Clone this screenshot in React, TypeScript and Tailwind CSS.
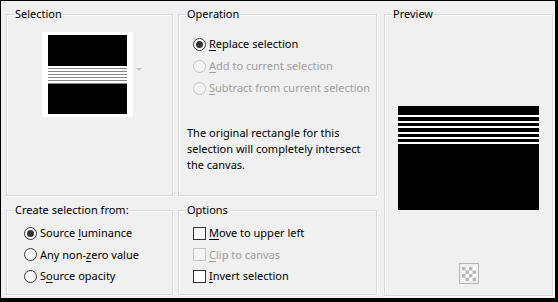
import React from "react"

const font = { fontFamily: '"Noto Sans", "Open Sans", sans-serif' }

function Radio({ checked, disabled }: { checked?: boolean; disabled?: boolean }) {
  return (
    <span
      className={`relative flex h-[13px] w-[13px] shrink-0 items-center justify-center rounded-full border ${
        disabled ? "border-[#c4c4c4] bg-[#f4f4f4]" : "border-[#333] bg-white"
      }`}
    >
      {checked && <span className="h-[7px] w-[7px] rounded-full bg-[#333]" />}
    </span>
  )
}

function Check({ disabled }: { disabled?: boolean }) {
  return (
    <span
      className={`h-[13px] w-[13px] shrink-0 border ${
        disabled ? "border-[#c4c4c4] bg-[#f4f4f4]" : "border-[#333] bg-white"
      }`}
    />
  )
}

function Group({ title, className, children }: { title: string; className?: string; children?: React.ReactNode }) {
  return (
    <div className={`flex flex-col border border-[#d9d9d9] shadow-[1px_1px_0_#fff,inset_1px_1px_0_#fff] ${className ?? ""}`}>
      <div className="-mt-[9px] ml-[7px] w-fit self-start bg-[#f0f0f0] px-[1px] text-[11px] leading-[16px]">{title}</div>
      {children}
    </div>
  )
}

function Option({
  kind,
  checked,
  disabled,
  label,
  className,
}: {
  kind: "radio" | "check"
  checked?: boolean
  disabled?: boolean
  label: React.ReactNode
  className?: string
}) {
  return (
    <div className={`flex items-center gap-[3px] ${disabled ? "text-[#a0a0a0]" : "text-black"} ${className ?? ""}`}>
      {kind === "radio" ? <Radio checked={checked} disabled={disabled} /> : <Check disabled={disabled} />}
      <span className="whitespace-nowrap text-[11px] leading-[16px]">{label}</span>
    </div>
  )
}

const U = ({ children }: { children: React.ReactNode }) => (
  <span className="underline underline-offset-[2px] decoration-1">{children}</span>
)

export default function App() {
  return (
    <div
      style={font}
      className="h-[302px] w-[558px] border-t border-l border-r-[3px] border-b-[4px] border-black bg-[#f0f0f0] pl-[5px] pt-[13px] text-[11px] text-black"
    >
      <div className="flex">
        {/* left two columns */}
        <div className="flex flex-col">
          <div className="flex h-[182px] gap-[5px]">
            <Group title="Selection" className="w-[167px]">
              <div className="mt-[10px] flex items-center justify-center pl-[4px]">
                <svg width="91" height="85" viewBox="0 0 91 85">
                  <rect width="91" height="85" fill="#fff" />
                  <rect x="6" y="3" width="79" height="79" fill="#000" />
                  {[0, 1, 2, 3, 4, 5].map((i) => (
                    <g key={i}>
                      <rect x="6" y={34 + i * 3} width="79" height="2" fill="#fff" />
                      <rect x="6" y={36 + i * 3} width="79" height="1" fill="#858585" />
                    </g>
                  ))}
                </svg>
                <svg width="6" height="4" viewBox="0 0 6 4" className="ml-[3px] mb-[10px]">
                  <polygon points="0,0 6,0 3,3" fill="#c2c2c2" />
                </svg>
              </div>
            </Group>
            <Group title="Operation" className="w-[199px]">
              <div className="mt-[11px] flex flex-col pl-[14px]">
                <Option
                  kind="radio"
                  checked
                  className="h-[22px]"
                  label={
                    <>
                      <U>R</U>eplace selection
                    </>
                  }
                />
                <Option
                  kind="radio"
                  disabled
                  className="h-[22px]"
                  label={
                    <>
                      <U>A</U>dd to current selection
                    </>
                  }
                />
                <Option
                  kind="radio"
                  disabled
                  className="h-[22px]"
                  label={
                    <>
                      <U>S</U>ubtract from current selection
                    </>
                  }
                />
              </div>
              <p className="mt-[26px] w-[185px] pl-[8px] leading-[16px]">
                The original rectangle for this selection will completely intersect the canvas.
              </p>
            </Group>
          </div>
          <div className="mt-[14px] flex h-[85px] gap-[5px]">
            <Group title="Create selection from:" className="w-[167px]">
              <div className="mt-[4px] flex flex-col pl-[17px]">
                <Option
                  kind="radio"
                  checked
                  className="h-[22px]"
                  label={
                    <>
                      Source <U>l</U>uminance
                    </>
                  }
                />
                <Option
                  kind="radio"
                  className="h-[21px]"
                  label={
                    <>
                      Any non-<U>z</U>ero value
                    </>
                  }
                />
                <Option
                  kind="radio"
                  className="h-[22px]"
                  label={
                    <>
                      S<U>o</U>urce opacity
                    </>
                  }
                />
              </div>
            </Group>
            <Group title="Options" className="w-[199px]">
              <div className="mt-[4px] flex flex-col pl-[14px]">
                <Option
                  kind="check"
                  className="h-[22px]"
                  label={
                    <>
                      <U>M</U>ove to upper left
                    </>
                  }
                />
                <Option
                  kind="check"
                  disabled
                  className="h-[21px]"
                  label={
                    <>
                      <U>C</U>lip to canvas
                    </>
                  }
                />
                <Option
                  kind="check"
                  className="h-[22px]"
                  label={
                    <>
                      <U>I</U>nvert selection
                    </>
                  }
                />
              </div>
            </Group>
          </div>
        </div>

        {/* preview */}
        <Group title="Preview" className="ml-[7px] h-[282px] w-[169px] items-center">
          <svg width="141" height="104" viewBox="0 0 141 104" className="mt-[84px]">
            <rect width="141" height="104" fill="#000" />
            {[9, 15, 20, 26, 31, 36].map((y) => (
              <rect key={y} x="0" y={y} width="141" height="2" fill="#fff" />
            ))}
          </svg>
          <div className="mt-[53px] flex h-[21px] w-[20px] items-center justify-center border border-[#b4b4b4] bg-[#f0f0f0]">
            <svg width="14" height="14" viewBox="0 0 14 14">
              <rect width="14" height="14" fill="#fff" />
              {[0, 1, 2, 3].map((r) =>
                [0, 1, 2, 3].map((c) =>
                  (r + c) % 2 === 0 ? (
                    <rect key={`${r}-${c}`} x={c * 3.5} y={r * 3.5} width="3.5" height="3.5" fill="#b8b8b8" />
                  ) : null
                )
              )}
            </svg>
          </div>
        </Group>
      </div>
    </div>
  )
}
